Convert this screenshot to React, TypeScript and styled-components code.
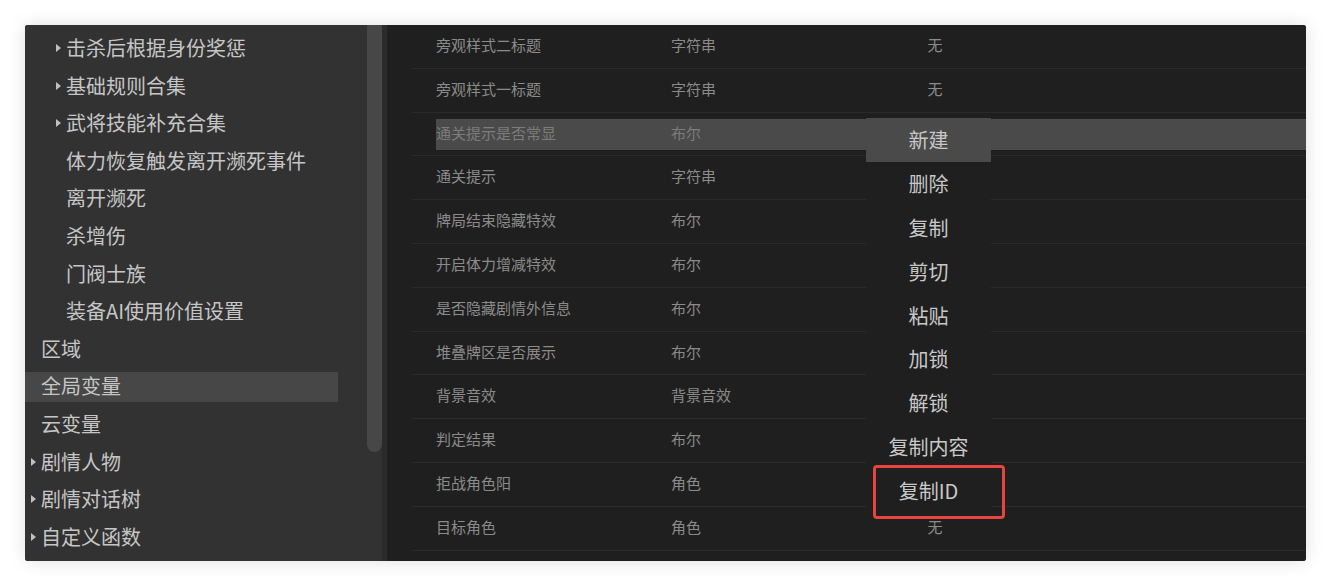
import React from "react";
import styled, { createGlobalStyle, css } from "styled-components";

const Global = createGlobalStyle`
  html, body { margin: 0; padding: 0; background: #ffffff; }
  body { font-family: "Noto Sans CJK SC", "Noto Sans", sans-serif; }
  * { box-sizing: border-box; }
`;

const Page = styled.div`
  width: 1331px;
  height: 586px;
  padding: 25px;
  background: #ffffff;
`;

const Panel = styled.div`
  width: 1281px;
  height: 536px;
  display: flex;
  border-radius: 3px;
  overflow: hidden;
  background: #1f1f1f;
  box-shadow: 0 0 18px rgba(0, 0, 0, 0.13);
`;

const Sidebar = styled.div`
  width: 357px;
  flex: none;
  display: flex;
  background: #323232;
`;

const TreeList = styled.div`
  flex: 1;
  display: flex;
  flex-direction: column;
  gap: 7.6px;
  padding-top: 9px;
  padding-right: 29px;
`;

const TreeRow = styled.div<{ $level: number; $selected?: boolean }>`
  height: 30px;
  flex: none;
  display: flex;
  align-items: flex-start;
  padding-left: ${(p) => 6 + (p.$level - 1) * 25}px;
  font-size: 20px;
  line-height: 28px;
  color: #c6c6c6;
  white-space: nowrap;
  ${(p) =>
    p.$selected &&
    css`
      background: #474747;
    `}
`;

const CaretSlot = styled.span`
  width: 10px;
  height: 28px;
  flex: none;
  display: flex;
  align-items: center;
`;

const Caret = styled.span`
  width: 0;
  height: 0;
  border-left: 5px solid #c0c0c0;
  border-top: 4px solid transparent;
  border-bottom: 4px solid transparent;
`;

const ScrollTrack = styled.div`
  width: 15px;
  flex: none;
  display: flex;
  flex-direction: column;
`;

const ScrollThumb = styled.div`
  margin-top: -12px;
  height: 439px;
  border-radius: 8px;
  background: #474747;
`;

const Divider = styled.div`
  width: 5px;
  flex: none;
  background: #2b2b2b;
`;

const TableArea = styled.div`
  position: relative;
  flex: 1;
  background: #1f1f1f;
  overflow: hidden;
`;

const TableRow = styled.div`
  height: 43.8px;
  margin-left: 25px;
  padding-top: 6px;
  border-bottom: 1px solid #2a2a2a;
`;

const RowCells = styled.div<{ $selected?: boolean }>`
  height: 31px;
  margin-left: 24px;
  display: grid;
  grid-template-columns: 235px 200px 128px 1fr;
  align-items: start;
  font-size: 15px;
  line-height: 27px;
  color: ${(p) => (p.$selected ? "#7c7c7c" : "#8b8b8b")};
  background: ${(p) => (p.$selected ? "#4a4a4a" : "transparent")};
  white-space: nowrap;
`;

const ValueCell = styled.span`
  text-align: center;
`;

const Menu = styled.div`
  position: absolute;
  left: 479px;
  top: 93px;
  width: 125px;
  background: #1f1f1f;
  display: flex;
  flex-direction: column;
`;

const MenuItem = styled.div<{ $active?: boolean }>`
  height: 43.8px;
  display: flex;
  align-items: center;
  justify-content: center;
  font-size: 20px;
  color: #c8c8c8;
  background: ${(p) => (p.$active ? "#4a4a4a" : "transparent")};
  white-space: nowrap;
`;

const Highlight = styled.div`
  position: absolute;
  left: 486px;
  top: 440px;
  width: 132px;
  height: 54px;
  border: 3px solid #e8433e;
  border-radius: 4px;
  pointer-events: none;
`;

type TreeItem = { label: string; level: number; caret?: boolean; selected?: boolean };

const tree: TreeItem[] = [
  { label: "击杀后根据身份奖惩", level: 2, caret: true },
  { label: "基础规则合集", level: 2, caret: true },
  { label: "武将技能补充合集", level: 2, caret: true },
  { label: "体力恢复触发离开濒死事件", level: 2 },
  { label: "离开濒死", level: 2 },
  { label: "杀增伤", level: 2 },
  { label: "门阀士族", level: 2 },
  { label: "装备AI使用价值设置", level: 2 },
  { label: "区域", level: 1 },
  { label: "全局变量", level: 1, selected: true },
  { label: "云变量", level: 1 },
  { label: "剧情人物", level: 1, caret: true },
  { label: "剧情对话树", level: 1, caret: true },
  { label: "自定义函数", level: 1, caret: true },
];

type Row = { name: string; type: string; value: string; selected?: boolean };

const rows: Row[] = [
  { name: "旁观样式二标题", type: "字符串", value: "无" },
  { name: "旁观样式一标题", type: "字符串", value: "无" },
  { name: "通关提示是否常显", type: "布尔", value: "", selected: true },
  { name: "通关提示", type: "字符串", value: "" },
  { name: "牌局结束隐藏特效", type: "布尔", value: "" },
  { name: "开启体力增减特效", type: "布尔", value: "" },
  { name: "是否隐藏剧情外信息", type: "布尔", value: "" },
  { name: "堆叠牌区是否展示", type: "布尔", value: "" },
  { name: "背景音效", type: "背景音效", value: "" },
  { name: "判定结果", type: "布尔", value: "" },
  { name: "拒战角色阳", type: "角色", value: "" },
  { name: "目标角色", type: "角色", value: "无" },
];

const menuItems = ["新建", "删除", "复制", "剪切", "粘贴", "加锁", "解锁", "复制内容", "复制ID"];

export default function App() {
  return (
    <>
      <Global />
      <Page>
        <Panel>
          <Sidebar>
            <TreeList>
              {tree.map((t) => (
                <TreeRow key={t.label} $level={t.level} $selected={t.selected}>
                  <CaretSlot>{t.caret && <Caret />}</CaretSlot>
                  {t.label}
                </TreeRow>
              ))}
            </TreeList>
            <ScrollTrack>
              <ScrollThumb />
            </ScrollTrack>
          </Sidebar>
          <Divider />
          <TableArea>
            {rows.map((r) => (
              <TableRow key={r.name}>
                <RowCells $selected={r.selected}>
                  <span>{r.name}</span>
                  <span>{r.type}</span>
                  <ValueCell>{r.value}</ValueCell>
                  <span />
                </RowCells>
              </TableRow>
            ))}
            <Menu>
              {menuItems.map((m, i) => (
                <MenuItem key={m} $active={i === 0}>
                  {m}
                </MenuItem>
              ))}
            </Menu>
            <Highlight />
          </TableArea>
        </Panel>
      </Page>
    </>
  );
}
